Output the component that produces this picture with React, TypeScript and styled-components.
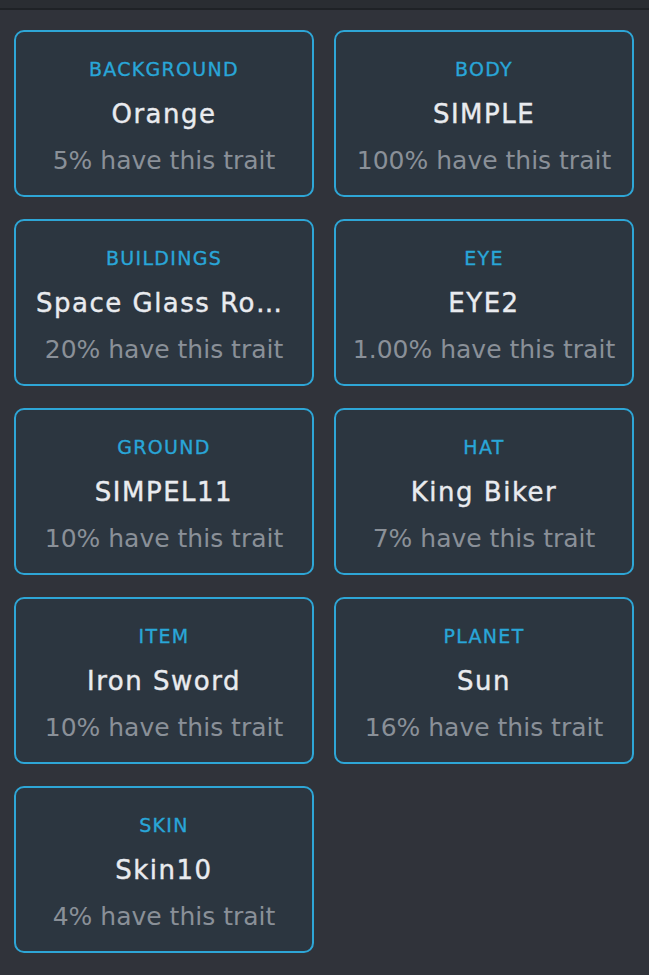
import { createGlobalStyle } from "styled-components";
import styled from "styled-components";

const GlobalStyle = createGlobalStyle`
  * { box-sizing: border-box; }
  html, body {
    margin: 0;
    padding: 0;
    background: #30333a;
    font-family: "DejaVu Sans", "Noto Sans", sans-serif;
  }
`;

type Trait = { type: string; value: string; percent: string };

const TRAITS: Trait[] = [
  { type: "BACKGROUND", value: "Orange", percent: "5%" },
  { type: "BODY", value: "SIMPLE", percent: "100%" },
  { type: "BUILDINGS", value: "Space Glass Room", percent: "20%" },
  { type: "EYE", value: "EYE2", percent: "1.00%" },
  { type: "GROUND", value: "SIMPEL11", percent: "10%" },
  { type: "HAT", value: "King Biker", percent: "7%" },
  { type: "ITEM", value: "Iron Sword", percent: "10%" },
  { type: "PLANET", value: "Sun", percent: "16%" },
  { type: "SKIN", value: "Skin10", percent: "4%" },
];

const Page = styled.div`
  min-height: 975px;
  background: #30333a;
`;

const TopBar = styled.div`
  height: 10px;
  background: #2a2d32;
  border-bottom: 2px solid #1f2226;
`;

const Grid = styled.div`
  display: grid;
  grid-template-columns: 300px 300px;
  column-gap: 20px;
  row-gap: 22px;
  padding: 20px 14px 0 14px;
`;

const Card = styled.div`
  height: 167px;
  border: 2px solid #2ea6d6;
  border-radius: 10px;
  background: #2c3640;
  padding: 23px 20px 0 20px;
  display: flex;
  flex-direction: column;
  align-items: center;
  text-align: center;
`;

const Type = styled.div`
  font-size: 19px;
  letter-spacing: 1.3px;
  color: #29a6d8;
  line-height: 28px;
  -webkit-text-stroke: 0.35px #29a6d8;
`;

const Value = styled.div`
  width: 100%;
  margin-top: 14px;
  font-size: 26px;
  letter-spacing: 1.5px;
  color: #e9ebef;
  line-height: 34px;
  white-space: nowrap;
  overflow: hidden;
  text-overflow: ellipsis;
  -webkit-text-stroke: 0.4px #e9ebef;
`;

const Rarity = styled.div`
  margin-top: 13px;
  font-size: 25px;
  color: #8a9098;
  line-height: 34px;
  white-space: nowrap;
`;

export default function App() {
  return (
    <Page>
      <GlobalStyle />
      <TopBar />
      <Grid>
        {TRAITS.map((t) => (
          <Card key={t.type}>
            <Type>{t.type}</Type>
            <Value>{t.value}</Value>
            <Rarity>{t.percent} have this trait</Rarity>
          </Card>
        ))}
      </Grid>
    </Page>
  );
}
